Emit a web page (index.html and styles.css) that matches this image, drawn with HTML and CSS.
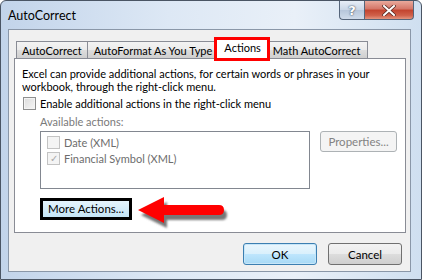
FILE: index.html
```html
<!DOCTYPE html>
<html lang="en">
<head>
    <meta charset="UTF-8">
    <title>AutoCorrect</title>
    <link rel="stylesheet" href="styles.css">
</head>
<body>
    <div class="window">
        <div class="titlebar">
            <span class="title">AutoCorrect</span>
            <div class="caption">
                <span class="cap help">?</span>
                <span class="cap close">
                    <svg width="14" height="11" viewBox="0 0 14 11">
                        <path d="M2 1 L12 10 M12 1 L2 10" stroke="#5a2a22" stroke-width="3.6" stroke-linecap="square"/>
                        <path d="M2 1 L12 10 M12 1 L2 10" stroke="#fff" stroke-width="2" stroke-linecap="square"/>
                    </svg>
                </span>
            </div>
        </div>
        <div class="client">
            <div class="tabs">
                <div class="tab">AutoCorrect</div>
                <div class="tab">AutoFormat As You Type</div>
                <div class="tab active">Actions</div>
                <div class="tab">Math AutoCorrect</div>
            </div>
            <div class="panel">
                <p class="intro">Excel can provide additional actions, for certain words or phrases in your<br>workbook, through the right-click menu.</p>
                <div class="check"><span class="box"></span>Enable additional actions in the right-click menu</div>
                <div class="group">
                    <div class="group-label">Available actions:</div>
                    <div class="row">
                        <div class="listbox">
                            <div class="item"><span class="box dis"></span>Date (XML)</div>
                            <div class="item"><span class="box dis tick">&#10003;</span>Financial Symbol (XML)</div>
                        </div>
                        <button class="btn props">Properties...</button>
                    </div>
                    <div class="more-wrap"><button class="btn more">More Actions...</button></div>
                </div>
                <svg class="arrow" width="96" height="34" viewBox="0 0 96 34">
                    <defs>
                        <filter id="sh" x="-10%" y="-20%" width="130%" height="160%">
                            <feGaussianBlur stdDeviation="1.2"/>
                        </filter>
                    </defs>
                    <path d="M3 15 L29 2 L29 10 L84 10 Q89 10 89 15 Q89 20 84 20 L29 20 L29 28 Z" fill="#777" filter="url(#sh)" transform="translate(2 3)"/>
                    <path d="M2 13 L28 0 L28 8 L83 8 Q88 8 88 13 Q88 18 83 18 L28 18 L28 26 Z" fill="#ff0000"/>
                </svg>
            </div>
            <div class="footer">
                <button class="btn ok">OK</button>
                <button class="btn">Cancel</button>
            </div>
        </div>
    </div>
</body>
</html>
```

FILE: styles.css
```css
body {
    margin: 0;
    background: #fff;
}

.window {
    width: 422px;
    height: 280px;
    box-sizing: border-box;
    border: 1px solid #4a5564;
    border-radius: 6px 6px 0 0;
    background: linear-gradient(to right, #c2d4ea, #dde8f5 40%, #e9f0f8 70%, #cfdff0);
    font-family: "Lato", "Liberation Sans", sans-serif;
    font-size: 11px;
    color: #000;
    overflow: hidden;
}

.titlebar {
    height: 28px;
    display: flex;
    align-items: flex-start;
}

.title {
    margin: 7px 0 0 7px;
    font-size: 12.5px;
}

.caption {
    margin-left: auto;
    margin-right: 7px;
    display: flex;
}

.cap {
    height: 19px;
    box-sizing: border-box;
    display: flex;
    align-items: center;
    justify-content: center;
    border: 1px solid #55657a;
    border-top: none;
}

.help {
    width: 25px;
    border-radius: 0 0 0 4px;
    border-right: none;
    background: linear-gradient(#e7eef7, #c9d6e6 50%, #b6c6da 51%, #cfdbea);
    color: #fff;
    font-family: "DejaVu Sans", sans-serif;
    font-size: 13px;
    font-weight: bold;
    text-shadow: 0 0 2px #44546a, 0 0 1px #44546a;
}

.close {
    width: 50px;
    border-radius: 0 0 4px 0;
    background: linear-gradient(#e9a99c, #d47566 45%, #c2432e 50%, #d0604a 80%, #e3957f);
}

.client {
    margin: 0 10px 0 7px;
    height: 243px;
    box-sizing: border-box;
    border: 1px solid #8a97a8;
    background: #f0f0f0;
    padding: 9px 5px 0 5px;
}

.tabs {
    display: flex;
    align-items: flex-end;
    height: 19px;
    padding-left: 2px;
}

.tab {
    height: 17px;
    box-sizing: border-box;
    padding: 1px 6px 0 6px;
    border: 1px solid #898c95;
    border-bottom: none;
    margin-right: -1px;
    background: linear-gradient(#f3f3f3, #ebebeb 50%, #dddddd 51%, #cfcfcf);
    line-height: 15px;
    font-size: 11px;
    white-space: nowrap;
}

.tab:first-child {
    padding: 1px 5px 0 5px;
}

.tab.active {
    position: relative;
    height: 20px;
    margin: 0 0 -1px -2px;
    padding: 0 6px 0 7px;
    background: #fff;
    outline: 3px solid #f00;
    outline-offset: -1px;
    z-index: 2;
}

.tab.active + .tab {
    margin-left: -2px;
}

.panel {
    position: relative;
    width: 392px;
    height: 175px;
    box-sizing: border-box;
    border: 1px solid #898c95;
    background: #fff;
    padding: 8px 7px 0 7px;
}

.intro {
    margin: 0;
    line-height: 13px;
    white-space: nowrap;
}

.check {
    display: flex;
    align-items: center;
    margin-top: 3px;
    height: 15px;
}

.box {
    width: 13px;
    height: 13px;
    box-sizing: border-box;
    border: 1px solid #8e8f8f;
    background: linear-gradient(135deg, #dcdcdc, #f6f6f6);
    box-shadow: inset 0 0 0 1px #f4f4f4;
    margin: 0 4px 0 1px;
}

.box.dis {
    border-color: #c3c3c3;
    background: #f4f4f4;
}

.tick {
    color: #a9a9a9;
    font-size: 10px;
    line-height: 11px;
    text-align: center;
}

.group {
    padding-left: 18px;
}

.group-label {
    color: #7a7a7a;
    margin-top: 3px;
    line-height: 15px;
}

.row {
    display: flex;
    align-items: flex-start;
    margin-top: 2px;
}

.listbox {
    width: 270px;
    height: 58px;
    box-sizing: border-box;
    border: 1px solid #828790;
    padding: 2px 5px;
}

.item {
    display: flex;
    align-items: center;
    height: 16px;
    color: #6d6d6d;
}

.btn {
    font-family: inherit;
    font-size: 11.5px;
    color: #000;
    height: 22px;
    box-sizing: border-box;
    border: 1px solid #707070;
    border-radius: 3px;
    background: linear-gradient(#f2f2f2, #ebebeb 50%, #dddddd 51%, #cfcfcf);
    padding: 0;
}

.props {
    margin-left: 10px;
    width: 77px;
    height: 21px;
    color: #838383;
    border-color: #adb2b5;
    background: #f4f4f4;
}

.more-wrap {
    display: inline-block;
    margin-top: 9px;
    border: 3px solid #000;
}

.more {
    display: block;
    width: 86px;
    height: 16px;
    border: none;
    border-radius: 0;
    background: linear-gradient(#e5f4fc, #c4e5f6);
    line-height: 16px;
}

.arrow {
    position: absolute;
    left: 121px;
    top: 138px;
}

.footer {
    display: flex;
    justify-content: flex-end;
    gap: 11px;
    padding: 10px 3px 0 0;
}

.footer .btn {
    width: 74px;
}

.footer .ok {
    border-color: #3c7fb1;
    box-shadow: inset 0 0 0 1px #c7e6f8;
    background: linear-gradient(#eaf6fd, #d9f0fc 50%, #bee6fd 51%, #a7d9f5);
}
```
